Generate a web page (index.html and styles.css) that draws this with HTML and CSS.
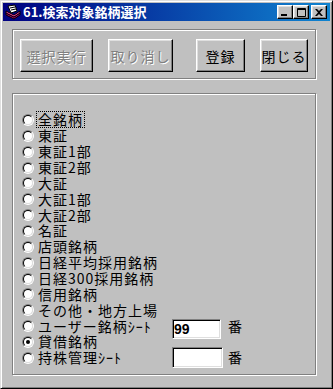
FILE: index.html
```html
<!DOCTYPE html>
<html lang="ja">
<head>
  <meta charset="UTF-8">
  <meta name="viewport" content="width=device-width, initial-scale=1.0">
  <title>61.検索対象銘柄選択</title>
  <link rel="stylesheet" href="styles.css">
</head>
<body>
  <div class="window">
    <div class="titlebar">
      <svg class="appicon" width="16" height="16" viewBox="0 0 16 16">
        <path d="M1 9 L9 13 L15 9 L15 11 L9 15 L1 11 Z" fill="#c0006f" stroke="#000" stroke-width="1"/>
        <path d="M1 7 L9 11 L15 7 L15 9 L9 13 L1 9 Z" fill="#ff3fa0" stroke="#000" stroke-width="1"/>
        <path d="M3 2 L10 1 L12 7 L6 9 Z" fill="#fff" stroke="#000" stroke-width="1"/>
        <path d="M5 4 L10 3 M6 6 L11 5" stroke="#000" stroke-width="1"/>
      </svg>
      <span class="title">61.検索対象銘柄選択</span>
      <div class="controls">
        <span class="cbtn">
          <svg width="8" height="7" viewBox="0 0 8 7"><rect x="0" y="5" width="6" height="2" fill="#000"/></svg>
        </span>
        <span class="cbtn">
          <svg width="9" height="9" viewBox="0 0 9 9"><path d="M0.5 0.5 H8.5 V8.5 H0.5 Z M0.5 1.5 H8.5" fill="none" stroke="#000" stroke-width="1"/></svg>
        </span>
        <span class="cbtn close">
          <svg width="8" height="7" viewBox="0 0 8 7"><path d="M0 0 H2 L4 2 L6 0 H8 L5 3.5 L8 7 H6 L4 5 L2 7 H0 L3 3.5 Z" fill="#000"/></svg>
        </span>
      </div>
    </div>

    <div class="client">
      <!-- ボタン -->
      <div class="group top">
        <button class="btn w1" disabled>選択実行</button>
        <button class="btn w2" disabled>取り消し</button>
        <button class="btn w3">登録</button>
        <button class="btn w4">閉じる</button>
      </div>

      <!-- 銘柄リスト -->
      <div class="group list">
        <div class="row"><span class="radio"></span><span class="label focus">全銘柄</span></div>
        <div class="row"><span class="radio"></span><span class="label">東証</span></div>
        <div class="row"><span class="radio"></span><span class="label">東証1部</span></div>
        <div class="row"><span class="radio"></span><span class="label">東証2部</span></div>
        <div class="row"><span class="radio"></span><span class="label">大証</span></div>
        <div class="row"><span class="radio"></span><span class="label">大証1部</span></div>
        <div class="row"><span class="radio"></span><span class="label">大証2部</span></div>
        <div class="row"><span class="radio"></span><span class="label">名証</span></div>
        <div class="row"><span class="radio"></span><span class="label">店頭銘柄</span></div>
        <div class="row"><span class="radio"></span><span class="label">日経平均採用銘柄</span></div>
        <div class="row"><span class="radio"></span><span class="label">日経300採用銘柄</span></div>
        <div class="row"><span class="radio"></span><span class="label">信用銘柄</span></div>
        <div class="row"><span class="radio"></span><span class="label">その他・地方上場</span></div>
        <div class="row">
          <span class="radio"></span><span class="label fixed">ユーザー銘柄ｼｰﾄ</span>
          <span class="cell"><span class="tb user">99</span></span><span class="ban">番</span>
        </div>
        <div class="row"><span class="radio on"></span><span class="label">貸借銘柄</span></div>
        <div class="row">
          <span class="radio"></span><span class="label fixed">持株管理ｼｰﾄ</span>
          <span class="cell"><span class="tb hold"></span></span><span class="ban">番</span>
        </div>
      </div>
    </div>
  </div>
</body>
</html>
```

FILE: styles.css
```css
body {
  margin: 0;
  background: #c0c0c0;
  font-family: "Noto Sans CJK JP", "Noto Sans", sans-serif;
  color: #000;
}
.window {
  width: 333px;
  height: 389px;
  box-sizing: border-box;
  padding: 2px;
  background: #c0c0c0;
  border: 1px solid;
  border-color: #dfdfdf #000 #000 #dfdfdf;
  box-shadow: inset 1px 1px #fff, inset -1px -1px #808080;
}
.titlebar {
  height: 18px;
  display: flex;
  align-items: center;
  padding: 0 3px 0 2px;
  background: linear-gradient(to right, #000080, #1084d0);
}
.appicon {
  flex: none;
  margin-right: 2px;
}
.title {
  color: #fff;
  font-size: 13px;
  font-weight: bold;
  line-height: 18px;
  white-space: nowrap;
}
.controls {
  margin-left: auto;
  display: flex;
}
.cbtn {
  width: 16px;
  height: 14px;
  box-sizing: border-box;
  display: flex;
  align-items: center;
  justify-content: center;
  background: #c0c0c0;
  border: 1px solid;
  border-color: #fff #000 #000 #fff;
  box-shadow: inset -1px -1px #808080, inset 1px 1px #dfdfdf;
}
.cbtn.close {
  margin-left: 2px;
}
.client {
  padding: 8px 0 0 9px;
}
.group {
  width: 304px;
  box-sizing: border-box;
  border: 1px solid #808080;
  box-shadow: inset 1px 1px #fff, 1px 1px #fff;
}
.group.top {
  height: 50px;
  display: flex;
  align-items: flex-start;
  padding: 9px 0 0 7px;
}
.btn {
  height: 33px;
  box-sizing: border-box;
  padding: 0;
  font-family: "Noto Sans CJK JP", "Noto Sans", sans-serif;
  font-size: 14px;
  letter-spacing: 1px;
  color: #000;
  background: #c0c0c0;
  border: 1px solid;
  border-color: #fff #000 #000 #fff;
  box-shadow: inset -1px -1px #808080, inset 1px 1px #dfdfdf;
}
.btn:disabled {
  color: #808080;
  text-shadow: 1px 1px #fff;
}
.w1 { width: 73px; }
.w2 { width: 65px; margin-left: 15px; }
.w3 { width: 49px; margin-left: 23px; }
.w4 { width: 48px; margin-left: 15px; }
.group.list {
  height: 282px;
  margin-top: 14px;
  padding: 18px 0 0 9px;
}
.row {
  height: 15.87px;
  display: flex;
  align-items: center;
  font-size: 14px;
}
.radio {
  flex: none;
  position: relative;
  width: 12px;
  height: 12px;
  box-sizing: border-box;
  border-radius: 50%;
  border: 1px solid;
  border-color: #808080 #fff #fff #808080;
}
.radio::before {
  content: "";
  position: absolute;
  left: 0;
  top: 0;
  width: 10px;
  height: 10px;
  box-sizing: border-box;
  border-radius: 50%;
  background: #fff;
  border: 1px solid;
  border-color: #000 #dfdfdf #dfdfdf #000;
}
.radio.on::after {
  content: "";
  position: absolute;
  left: 3px;
  top: 3px;
  width: 4px;
  height: 4px;
  border-radius: 50%;
  background: #000;
}
.label {
  margin-left: 4px;
  line-height: 15px;
  letter-spacing: 1px;
  white-space: nowrap;
}
.label.focus {
  margin-left: 3px;
  padding: 0 1px;
  outline: 1px dotted #000;
}
.label.fixed {
  width: 134px;
}
.cell {
  width: 56px;
  flex: none;
  display: flex;
}
.tb {
  box-sizing: border-box;
  height: 20px;
  padding-left: 1px;
  background: #fff;
  border: 1px solid;
  border-color: #808080 #fff #fff #808080;
  box-shadow: inset 1px 1px #000, inset -1px -1px #dfdfdf;
  font-family: "Liberation Sans", Arial, sans-serif;
  font-weight: bold;
  font-size: 14px;
  letter-spacing: 0;
  line-height: 18px;
}
.tb.user {
  width: 49px;
  margin-top: 6px;
}
.tb.hold {
  width: 51px;
  height: 21px;
}
.ban {
  font-size: 14px;
  line-height: 15px;
}
```
